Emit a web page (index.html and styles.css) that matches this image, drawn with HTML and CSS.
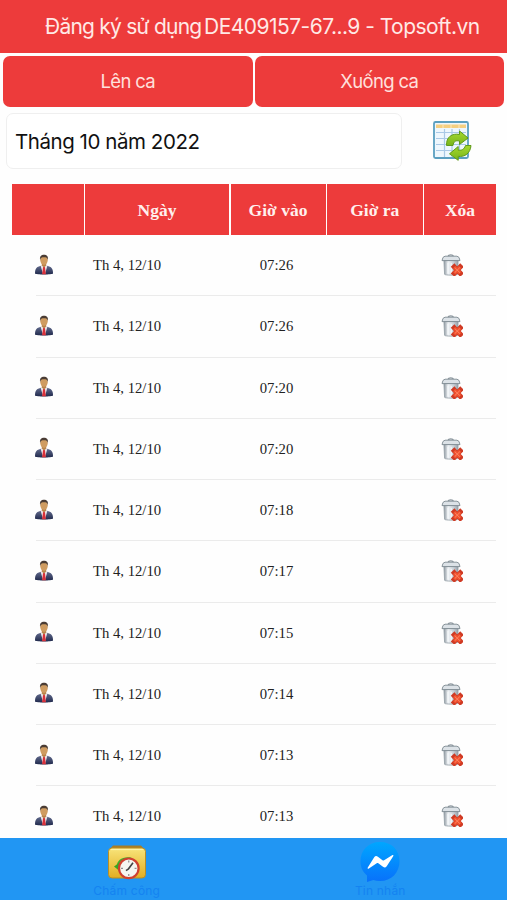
FILE: index.html
```
<!DOCTYPE html>
<html lang="vi">
<head>
  <meta charset="UTF-8" />
  <meta name="viewport" content="width=device-width, initial-scale=1.0"/>
  <title>Chấm công</title>
  <link rel="stylesheet" href="styles.css">
</head>
<body>
  <svg class="icons" aria-hidden="true">
    <defs>
      <linearGradient id="can" x1="0" x2="1" y1="0" y2="0">
        <stop offset="0" stop-color="#8d979f"/>
        <stop offset=".3" stop-color="#f0f3f6"/>
        <stop offset=".65" stop-color="#cdd5db"/>
        <stop offset="1" stop-color="#98a2aa"/>
      </linearGradient>
      <linearGradient id="suit" x1="0" x2="0" y1="0" y2="1">
        <stop offset="0" stop-color="#626b8d"/>
        <stop offset="1" stop-color="#20294c"/>
      </linearGradient>
      <linearGradient id="leaf" x1="0" x2="0" y1="0" y2="1">
        <stop offset="0" stop-color="#a5d92f"/>
        <stop offset="1" stop-color="#78b51a"/>
      </linearGradient>
      <linearGradient id="gold" x1="0" x2="0" y1="0" y2="1">
        <stop offset="0" stop-color="#f8e47a"/>
        <stop offset="1" stop-color="#e3ae22"/>
      </linearGradient>
      <linearGradient id="chat" x1="0" x2="0" y1="0" y2="1">
        <stop offset="0" stop-color="#00a7ff"/>
        <stop offset="1" stop-color="#0871fb"/>
      </linearGradient>
    </defs>
    <symbol id="user" viewBox="0 0 20 22">
      <path d="M1 19.600c0-5 1.400-6.800 6-7.800h6c4.600 1 6 2.800 6 7.800-.6 1.300-17.400 1.300-18 0z" fill="url(#suit)"/>
      <path d="M6.700 12.100 8 10.500h4l1.300 1.600-2.300 8H9z" fill="#ece4e6"/>
      <path d="M9.100 13h1.800l1 7.200H8.100z" fill="#d9303a"/>
      <path d="M7.800 8h4.400v3.400L10 13.400l-2.200-2z" fill="#b98348"/>
      <ellipse cx="10" cy="6.300" rx="3.700" ry="4.600" fill="#cf9c61"/>
      <path d="M6.100 6C5.500 2.500 7.200.8 10 .8s4.500 1.700 3.900 5.200c-.7-2.200-1.500-2.700-3.900-2.700S6.800 3.800 6.100 6z" fill="#4a3c34"/>
    </symbol>
    <symbol id="trash" viewBox="0 0 22 22">
      <path d="M7 2.300C7.500.5 12 .5 12.500 2.300" fill="none" stroke="#8b959d" stroke-width="1.300"/>
      <path d="M2.900 6.500h14.200l-.4 13.800c-.1 1.100-13 1.100-13.100 0z" fill="url(#can)" stroke="#929da5" stroke-width=".8"/>
      <path d="M7 9v10.500M10.200 9v10.500" stroke="#f6f8fa" stroke-width="1.200"/>
      <path d="M2 3.400 4 2.200h12l2 1.200 1 3.200H1z" fill="#dce2e7" stroke="#7c8890" stroke-width=".9"/>
      <path d="M13.300 12.900l6 6.400m0-6.400-6 6.400" stroke="#cf3a24" stroke-width="5" stroke-linecap="square"/>
      <path d="M13.300 12.900l6 6.400m0-6.400-6 6.400" stroke="#f0512f" stroke-width="3.600"/>
      <path d="M13.700 13.500l5.200 5.200m0-5.200-5.200 5.200" stroke="#ff8b68" stroke-width=".9"/>
    </symbol>
  </svg>

  <div class="app">
    <header class="title-bar">
      <span class="title">Đăng ký sử dụng</span>
      <span class="device">DE409157-67...9 - Topsoft.vn</span>
    </header>

    <div class="actions">
      <button class="btn">Lên ca</button>
      <button class="btn">Xuống ca</button>
    </div>

    <div class="filter">
      <div class="month">Tháng 10 năm 2022</div>
      <svg class="refresh" viewBox="0 0 40 42">
        <rect x="2" y="2" width="34" height="36" rx="1.500" fill="#eef7fd" stroke="#5b9fc0" stroke-width="1.800"/>
        <path d="M4 4.500h30v3.500H4z" fill="#f5cf80"/>
        <path d="M4 12.500h30M4 18.500h30M4 24.500h30M4 30.500h30M12.500 9v28M20 9v28M27.500 9v28" stroke="#a9c9e6" stroke-width="1.200"/>
        <path d="M11 4v4M19 4v4M27 4v4" stroke="#fbe7bd"/>
        <path d="M14.500 25.500c-.4-8.500 5.500-12.500 13-11V11l8.600 7-8.600 6.500V21c-4-.8-6 .4-6.500 4.500z" fill="url(#leaf)" stroke="#5f9a1a"/>
        <path d="M39 25.500h-5.500c-1.300 4-3.800 5.100-7.300 4.600v-3.600l-8.700 7.300 8.700 6.500v-3.900c6.800.8 12.100-3.200 12.800-10.900z" fill="url(#leaf)" stroke="#5f9a1a"/>
      </svg>
    </div>

    <div class="list">
      <div class="row head">
        <div></div><div>Ngày</div><div>Giờ vào</div><div>Giờ ra</div><div>Xóa</div>
      </div>
      <div class="row"><svg class="user"><use href="#user"/></svg><div class="day">Th 4, 12/10</div><div class="time">07:26</div><div class="time"></div><svg class="trash"><use href="#trash"/></svg></div>
      <div class="row"><svg class="user"><use href="#user"/></svg><div class="day">Th 4, 12/10</div><div class="time">07:26</div><div class="time"></div><svg class="trash"><use href="#trash"/></svg></div>
      <div class="row"><svg class="user"><use href="#user"/></svg><div class="day">Th 4, 12/10</div><div class="time">07:20</div><div class="time"></div><svg class="trash"><use href="#trash"/></svg></div>
      <div class="row"><svg class="user"><use href="#user"/></svg><div class="day">Th 4, 12/10</div><div class="time">07:20</div><div class="time"></div><svg class="trash"><use href="#trash"/></svg></div>
      <div class="row"><svg class="user"><use href="#user"/></svg><div class="day">Th 4, 12/10</div><div class="time">07:18</div><div class="time"></div><svg class="trash"><use href="#trash"/></svg></div>
      <div class="row"><svg class="user"><use href="#user"/></svg><div class="day">Th 4, 12/10</div><div class="time">07:17</div><div class="time"></div><svg class="trash"><use href="#trash"/></svg></div>
      <div class="row"><svg class="user"><use href="#user"/></svg><div class="day">Th 4, 12/10</div><div class="time">07:15</div><div class="time"></div><svg class="trash"><use href="#trash"/></svg></div>
      <div class="row"><svg class="user"><use href="#user"/></svg><div class="day">Th 4, 12/10</div><div class="time">07:14</div><div class="time"></div><svg class="trash"><use href="#trash"/></svg></div>
      <div class="row"><svg class="user"><use href="#user"/></svg><div class="day">Th 4, 12/10</div><div class="time">07:13</div><div class="time"></div><svg class="trash"><use href="#trash"/></svg></div>
      <div class="row"><svg class="user"><use href="#user"/></svg><div class="day">Th 4, 12/10</div><div class="time">07:13</div><div class="time"></div><svg class="trash"><use href="#trash"/></svg></div>
    </div>

    <nav class="tabs">
      <div class="tab">
        <svg viewBox="0 0 40 40">
          <path d="M3 7 6 3.500h28L37 7v6H3z" fill="#a97d22"/>
          <rect x="1.500" y="6" width="37" height="30" rx="3.500" fill="url(#gold)" stroke="#b98d24"/>
          <path d="M4 7.500h32" stroke="#fff3a8" stroke-width="1.200"/>
          <path d="M9.500 25c.5-7.500 6-11 15.500-9.500-6 1-9.500 4.500-10 10.500z" fill="#3fae2c"/>
          <path d="M7 24.500 15.500 18.500v13z" fill="#38a525"/>
          <circle cx="21.800" cy="26.300" r="9.800" fill="#f5f5f0" stroke="#d0402f" stroke-width="2.200"/>
          <path d="M21.800 18.500v2M21.800 32v2M14 26.300h2M27.600 26.300h2" stroke="#777"/>
          <path d="M26 20.800 21.500 26.800l-2.500 1.800" fill="none" stroke="#444" stroke-width="1.600"/>
        </svg>
        <span>Chấm công</span>
      </div>
      <div class="tab">
        <svg viewBox="0 0 40 40">
          <path d="M20 0C8.500 0 .5 8.200.5 19.200c0 6.100 2.200 10.600 6.500 14.300V40l6.300-2.100c2.200.7 4.300 1.100 6.700 1.100 11.500 0 19.500-8.500 19.500-19.800S31.500 0 20 0z" fill="url(#chat)"/>
          <path d="M7.800 25.500 14.200 15.300c1-1.600 2.300-1.700 3.700-.6l4.600 3.500c.6.400 1 .4 1.600 0l8-5c.9-.5 1.700.1 1.100 1l-6.500 10c-1 1.500-2.300 1.700-3.700.6l-4.700-3.500c-.6-.4-1-.4-1.600 0l-7.800 5.200c-.9.600-1.700-.1-1.100-1z" fill="#fff"/>
        </svg>
        <span>Tin nhắn</span>
      </div>
    </nav>
  </div>
</body>
</html>
```
FILE: styles.css
```
* {
  box-sizing: border-box;
}

body {
  margin: 0;
  background-color: #fefefe;
  font-family: Inter, "Liberation Sans", sans-serif;
}

.icons {
  position: absolute;
  width: 0;
  height: 0;
}

.app {
  display: flex;
  flex-direction: column;
  height: 100vh;
  overflow: hidden;
}

.title-bar {
  display: flex;
  flex: none;
  gap: 3px;
  height: 53px;
  padding-left: 45px;
  background-color: #ed3b3b;
  color: #ffe9e6;
  font-size: 21px;
  line-height: 53px;
  white-space: nowrap;
}

.title {
  width: 156px;
  letter-spacing: -0.77px;
}

.device {
  letter-spacing: -0.53px;
}

.actions {
  display: flex;
  flex: none;
  gap: 2px;
  padding: 3px 3px 0;
}

.btn {
  flex: 1;
  height: 50.5px;
  padding: 0;
  border: 0;
  border-radius: 7px;
  background-color: #ed3b3b;
  color: #ffe0dd;
  font-family: inherit;
  font-size: 18.5px;
  letter-spacing: -0.65px;
}

.filter {
  display: flex;
  flex: none;
  align-items: center;
  height: 57px;
  margin-top: 6px;
  padding-left: 6px;
}

.month {
  width: 396px;
  height: 56px;
  padding-left: 8px;
  border: 1px solid #efefef;
  border-radius: 7px;
  background-color: #fff;
  color: #111;
  font-size: 20.5px;
  letter-spacing: -0.45px;
  line-height: 56px;
}

.refresh {
  width: 40px;
  height: 42px;
  margin-left: 30px;
}

.list {
  flex: 1;
  min-height: 0;
  margin: 14.5px 11px 0 12px;
  overflow: hidden;
  font-family: "Liberation Serif", serif;
}

.row {
  display: grid;
  grid-template-columns: 71.5px 144px 95px 95.5px 72px;
  column-gap: 1.5px;
  align-items: center;
  height: 61.25px;
  background: linear-gradient(#ebebeb, #ebebeb) 24px 100% / 100% 1px no-repeat;
  color: #222;
  font-size: 14.7px;
}

.head {
  height: 51px;
  background: none;
  color: #fff0ee;
  font-size: 17.5px;
  font-weight: bold;
  line-height: 52px;
  text-align: center;
}

.head div {
  height: 51px;
  background-color: #ed3b3b;
}

.user {
  width: 20px;
  height: 22px;
  margin-left: 22px;
  margin-bottom: 2px;
}

.day {
  padding-left: 8px;
}

.time {
  padding-right: 3px;
  text-align: center;
}

.trash {
  width: 22px;
  height: 22px;
  margin-left: 16.5px;
  margin-bottom: 1px;
}

.tabs {
  display: flex;
  flex: none;
  height: 62px;
  background-color: #2196f3;
}

.tab {
  display: flex;
  flex: 1;
  flex-direction: column;
  align-items: center;
  padding-top: 4px;
  color: #1483f1;
  font-size: 12px;
  letter-spacing: 0.2px;
  line-height: 17px;
}

.tab svg {
  width: 40px;
  height: 40px;
}
```
